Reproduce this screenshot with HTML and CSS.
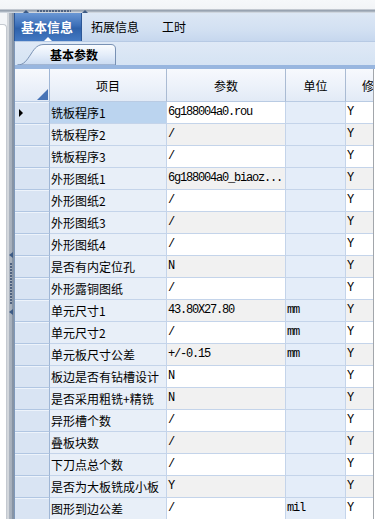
FILE: index.html
```html
<!DOCTYPE html>
<html lang="zh-CN">
<head>
<meta charset="utf-8">
<title>基本参数</title>
<link rel="stylesheet" href="styles.css">
</head>
<body>
<div class="app">
  <div class="topbar">
    <span class="tri-up"></span>
    <span class="hgrip"></span>
    <span class="tri-up"></span>
  </div>
  <div class="main">
    <div class="leftpanel"><div class="panel"></div></div>
    <div class="vsplit">
      <span class="tri-left"></span>
      <span class="vgrip"></span>
      <span class="tri-left"></span>
    </div>
    <div class="content">
      <div class="tabs">
        <div class="tab active">基本信息</div>
        <div class="tab t2">拓展信息</div>
        <div class="tab t3">工时</div>
      </div>
      <div class="lower">
        <div class="subtabs">
          <div class="subtab">
            <svg class="subtab-bg" width="100" height="21" viewBox="0 0 100 21">
              <defs>
                <linearGradient id="stg" x1="0" y1="0" x2="0" y2="1">
                  <stop offset="0" stop-color="#fbfdff"/>
                  <stop offset="0.5" stop-color="#e4edf9"/>
                  <stop offset="1" stop-color="#c9daf1"/>
                </linearGradient>
              </defs>
              <path d="M0.5,21 C7,21 10,16 14,10 C18,3.5 21,0.5 27,0.5 L94,0.5 Q98.5,0.5 98.5,5 L98.5,21 Z" fill="url(#stg)" stroke="#7891b4" stroke-width="1"/>
            </svg>
            <span class="subtab-label">基本参数</span>
          </div>
        </div>
        <div class="band"></div>
        <div class="gridwrap">
          <div class="grid">
            <div class="row head">
              <div class="rh corner"><span class="corner-tri"></span></div>
              <div class="hc">项目</div>
              <div class="hc">参数</div>
              <div class="hc">单位</div>
              <div class="hc">修改</div>
            </div>
            <div class="row sel">
              <div class="rh"><span class="marker"></span></div>
              <div class="c name">铣板程序1</div>
              <div class="c val mono">6g188004a0.rou</div>
              <div class="c unit mono"></div>
              <div class="c mod mono">Y</div>
            </div>
            <div class="row">
              <div class="rh"></div>
              <div class="c name">铣板程序2</div>
              <div class="c val mono">/</div>
              <div class="c unit mono"></div>
              <div class="c mod mono">Y</div>
            </div>
            <div class="row">
              <div class="rh"></div>
              <div class="c name">铣板程序3</div>
              <div class="c val mono">/</div>
              <div class="c unit mono"></div>
              <div class="c mod mono">Y</div>
            </div>
            <div class="row">
              <div class="rh"></div>
              <div class="c name">外形图纸1</div>
              <div class="c val mono">6g188004a0_biaoz...</div>
              <div class="c unit mono"></div>
              <div class="c mod mono">Y</div>
            </div>
            <div class="row">
              <div class="rh"></div>
              <div class="c name">外形图纸2</div>
              <div class="c val mono">/</div>
              <div class="c unit mono"></div>
              <div class="c mod mono">Y</div>
            </div>
            <div class="row">
              <div class="rh"></div>
              <div class="c name">外形图纸3</div>
              <div class="c val mono">/</div>
              <div class="c unit mono"></div>
              <div class="c mod mono">Y</div>
            </div>
            <div class="row">
              <div class="rh"></div>
              <div class="c name">外形图纸4</div>
              <div class="c val mono">/</div>
              <div class="c unit mono"></div>
              <div class="c mod mono">Y</div>
            </div>
            <div class="row">
              <div class="rh"></div>
              <div class="c name">是否有内定位孔</div>
              <div class="c val mono">N</div>
              <div class="c unit mono"></div>
              <div class="c mod mono">Y</div>
            </div>
            <div class="row">
              <div class="rh"></div>
              <div class="c name">外形露铜图纸</div>
              <div class="c val mono">/</div>
              <div class="c unit mono"></div>
              <div class="c mod mono">Y</div>
            </div>
            <div class="row">
              <div class="rh"></div>
              <div class="c name">单元尺寸1</div>
              <div class="c val mono">43.80X27.80</div>
              <div class="c unit mono">mm</div>
              <div class="c mod mono">Y</div>
            </div>
            <div class="row">
              <div class="rh"></div>
              <div class="c name">单元尺寸2</div>
              <div class="c val mono">/</div>
              <div class="c unit mono">mm</div>
              <div class="c mod mono">Y</div>
            </div>
            <div class="row">
              <div class="rh"></div>
              <div class="c name">单元板尺寸公差</div>
              <div class="c val mono">+/-0.15</div>
              <div class="c unit mono">mm</div>
              <div class="c mod mono">Y</div>
            </div>
            <div class="row">
              <div class="rh"></div>
              <div class="c name">板边是否有钻槽设计</div>
              <div class="c val mono">N</div>
              <div class="c unit mono"></div>
              <div class="c mod mono">Y</div>
            </div>
            <div class="row">
              <div class="rh"></div>
              <div class="c name">是否采用粗铣+精铣</div>
              <div class="c val mono">N</div>
              <div class="c unit mono"></div>
              <div class="c mod mono">Y</div>
            </div>
            <div class="row">
              <div class="rh"></div>
              <div class="c name">异形槽个数</div>
              <div class="c val mono">/</div>
              <div class="c unit mono"></div>
              <div class="c mod mono">Y</div>
            </div>
            <div class="row">
              <div class="rh"></div>
              <div class="c name">叠板块数</div>
              <div class="c val mono">/</div>
              <div class="c unit mono"></div>
              <div class="c mod mono">Y</div>
            </div>
            <div class="row">
              <div class="rh"></div>
              <div class="c name">下刀点总个数</div>
              <div class="c val mono">/</div>
              <div class="c unit mono"></div>
              <div class="c mod mono">Y</div>
            </div>
            <div class="row">
              <div class="rh"></div>
              <div class="c name">是否为大板铣成小板</div>
              <div class="c val mono">Y</div>
              <div class="c unit mono"></div>
              <div class="c mod mono">Y</div>
            </div>
            <div class="row">
              <div class="rh"></div>
              <div class="c name">图形到边公差</div>
              <div class="c val mono">/</div>
              <div class="c unit mono">mil</div>
              <div class="c mod mono">Y</div>
            </div>
          </div>
          <div class="edge"></div>
        </div>
      </div>
    </div>
  </div>
</div>
</body>
</html>
```

FILE: styles.css
```css
* { box-sizing: border-box; margin: 0; padding: 0; }
html, body { width: 375px; height: 519px; overflow: hidden; background: #fff; }
body {
  font-family: "Noto Sans CJK SC", "Noto Sans", sans-serif;
  font-size: 12px;
  color: #000;
}
.app { display: flex; flex-direction: column; height: 519px; }

/* top horizontal splitter */
.topbar {
  height: 13px;
  flex: none;
  display: flex;
  align-items: flex-end;
  padding-left: 23px;
  padding-bottom: 0;
  background: linear-gradient(to bottom,
    #f6f8fa 0, #f2f4f7 9px,
    #c2c8d0 9px, #c2c8d0 10px,
    #98a3b1 10px, #98a3b1 11px,
    #aab4c0 11px, #aab4c0 12px,
    #cfd6df 12px);
}
.tri-up {
  width: 0; height: 0;
  border-left: 3px solid transparent;
  border-right: 3px solid transparent;
  border-bottom: 3px solid #3d5b85;
}
.hgrip {
  width: 34px; height: 2px;
  margin: 0 11px 1px 8px;
  background: repeating-linear-gradient(to right, #4f6280 0 2px, transparent 2px 3px);
}

.main { flex: 1; display: flex; min-height: 0; }

.leftpanel {
  width: 7px; flex: none;
  padding-top: 11px;
  background: #f3f5f8;
}
.leftpanel .panel {
  height: 100%;
  background: #fff;
  border: 1px solid #c4c9d0;
  border-left: none;
  border-bottom: none;
  border-radius: 0 4px 0 0;
}

.vsplit {
  width: 7px; flex: none;
  display: flex; flex-direction: column; align-items: center;
  padding-top: 239px;
  background: linear-gradient(to right, #d3d7dc 0, #d3d7dc 2px, #adb5c0 2px, #a4adb9 5px, #8794a5 5px);
}
.tri-left {
  width: 0; height: 0;
  border-top: 3px solid transparent;
  border-bottom: 3px solid transparent;
  border-right: 4px solid #3d5b85;
}
.vgrip {
  width: 2px; height: 42px;
  margin: 5px 0 4px;
  background: repeating-linear-gradient(to bottom, #4f6280 0 2px, transparent 2px 3px);
}

.content { flex: 1; display: flex; flex-direction: column; min-width: 0; }

/* main tabs */
.tabs {
  height: 28px; flex: none;
  display: flex;
  background: linear-gradient(to bottom, #dce7f5 0, #d2e0f2 60%, #c6d7ee 100%);
}
.tab {
  line-height: 28px;
  font-size: 12px;
  white-space: nowrap;
}
.tab.active {
  position: relative;
  width: 68px;
  padding-left: 6px;
  color: #fff;
  font-weight: bold;
  font-size: 13px;
  background: linear-gradient(to bottom, #6a97d4 0, #3c6fb8 45%, #2f62ab 55%, #4479c2 100%);
  border-left: 1px solid #2c5797;
  border-right: 1px solid #2c5797;
}
.tab.active::after {
  content: "";
  position: absolute;
  left: 29px; bottom: 0;
  width: 0; height: 0;
  border-left: 4px solid transparent;
  border-right: 4px solid transparent;
  border-bottom: 4px solid #fff;
}
.tab.t2 { padding-left: 9px; padding-right: 11px; }
.tab.t3 { padding-left: 12px; }

.lower {
  flex: 1; display: flex; flex-direction: column; min-height: 0;
  border-left: 1px solid #7f98b9;
}

.subtabs {
  height: 24px; flex: none;
  display: flex; align-items: flex-end;
  padding-left: 2px;
  border-top: 1px solid #b7cae4;
  background: linear-gradient(to bottom, #dfe9f6 0, #d5e3f3 100%);
}
.subtab {
  position: relative;
  width: 100px; height: 21px;
  display: flex; align-items: center; justify-content: center;
}
.subtab-bg { position: absolute; left: 0; top: 0; }
.subtab-label {
  position: relative;
  padding-left: 14px;
  font-weight: bold;
  font-size: 12px;
  line-height: 21px;
}

.band { height: 4px; flex: none; background: #98b6df; }

.gridwrap { flex: 1; display: flex; min-height: 0; overflow: hidden; }
.grid { width: 358px; flex: none; overflow: hidden; }
.edge { width: 2px; flex: none; border-left: 1px solid #a2a6ab; background: #fff; }

.row {
  display: grid;
  grid-template-columns: 35px 117px 119px 60px 57px;
  width: 388px;
  height: 22px;
}
.row.head { height: 33px; }

.rh {
  display: flex; align-items: center;
  padding-left: 4px;
  background: #d9e4f3;
  border-right: 1px solid #9fb6d5;
  border-bottom: 1px solid #b1c6e2;
  box-shadow: inset 0 1px 0 #edf3fb;
}
.rh.corner {
  align-items: flex-end; justify-content: flex-end;
  padding: 0 1px 1px 0;
  background: linear-gradient(to bottom, #f7f9fd 0, #e2eaf6 100%);
  box-shadow: none;
  border-bottom: 1px solid #b9cbe3;
}
.corner-tri {
  width: 0; height: 0;
  border-left: 11px solid transparent;
  border-bottom: 11px solid #4673b6;
}
.marker {
  width: 0; height: 0;
  border-top: 4px solid transparent;
  border-bottom: 4px solid transparent;
  border-left: 4px solid #000;
}

.hc {
  display: flex; align-items: center; justify-content: center;
  background: linear-gradient(to bottom, #f7f9fd 0, #edf2fa 50%, #e2eaf6 100%);
  border-right: 1px solid #aabbd3;
  border-bottom: 1px solid #b9cbe3;
  white-space: nowrap;
}

.c {
  padding-left: 1px;
  line-height: 21px;
  white-space: nowrap;
  overflow: hidden;
  border-right: 1px solid #c4d4ea;
  border-bottom: 1px solid #c4d4ea;
}
.name { background: #e8eff8; }
.sel .name { background: #bbd4ef; }
.val, .mod { background: #fff; }
.row:nth-child(odd) .val, .row:nth-child(odd) .mod { background: #f1f1f1; }
.unit { background: #e4edf9; }
.mono {
  font-family: "Liberation Mono", "DejaVu Sans Mono", monospace;
  font-size: 12px;
  letter-spacing: -1.2px;
}
```
